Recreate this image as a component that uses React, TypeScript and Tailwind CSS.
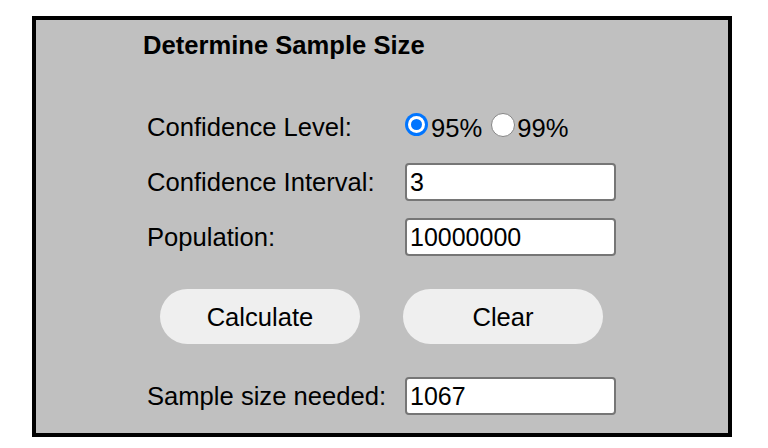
import { useState } from 'react';

function Radio({ checked }: { checked: boolean }) {
  if (checked) {
    return (
      <span className="mb-[5px] flex h-[23px] w-[23px] items-center justify-center rounded-full bg-[#0075ff]">
        <span className="flex h-[17px] w-[17px] items-center justify-center rounded-full bg-white">
          <span className="h-[11px] w-[11px] rounded-full bg-[#0075ff]" />
        </span>
      </span>
    );
  }
  return <span className="mb-[5px] h-[24px] w-[24px] rounded-full border-[1.5px] border-[#858585] bg-white" />;
}

function Field({ value }: { value: string }) {
  return (
    <div className="flex h-[38px] w-[211px] items-center rounded-[4px] border-2 border-[#767676] bg-white pl-[3px] text-[25px] leading-none">
      {value}
    </div>
  );
}

export default function App() {
  const [level, setLevel] = useState(95);

  return (
    <div className="min-h-[448px] bg-white pl-[32px] pt-[16px] font-['Liberation_Sans',Arial,sans-serif] text-black">
      <div className="h-[421px] w-[700px] border-4 border-black bg-[#c0c0c0] pt-[10px]">
        {/* Title */}
        <h1 className="pl-[107px] text-[25.6px] font-bold leading-[30px]">Determine Sample Size</h1>

        {/* Form rows */}
        <div className="mt-[47px] flex flex-col pl-[111px] text-[25.6px] leading-[30px]">
          <div className="flex h-[40px] items-center">
            <div className="w-[258px]">Confidence Level:</div>
            <div className="flex items-center">
              <button className="flex items-center" onClick={() => setLevel(95)}>
                <Radio checked={level === 95} />
                <span className="ml-[3px] mt-[2px]">95%</span>
              </button>
              <button className="ml-[9px] flex items-center" onClick={() => setLevel(99)}>
                <Radio checked={level === 99} />
                <span className="ml-[2px] mt-[2px]">99%</span>
              </button>
            </div>
          </div>

          <div className="mt-[15px] flex h-[40px] items-center">
            <div className="w-[258px]">Confidence Interval:</div>
            <Field value="3" />
          </div>

          <div className="mt-[15px] flex h-[40px] items-center">
            <div className="w-[258px]">Population:</div>
            <Field value="10000000" />
          </div>

          {/* Buttons */}
          <div className="mt-[32px] flex gap-[43px] pl-[13px]">
            <button className="h-[55px] w-[200px] rounded-full bg-[#efefef]">Calculate</button>
            <button className="h-[55px] w-[200px] rounded-full bg-[#efefef]">Clear</button>
          </div>

          <div className="mt-[32px] flex h-[40px] items-center">
            <div className="w-[258px]">Sample size needed:</div>
            <Field value="1067" />
          </div>
        </div>
      </div>
    </div>
  );
}
